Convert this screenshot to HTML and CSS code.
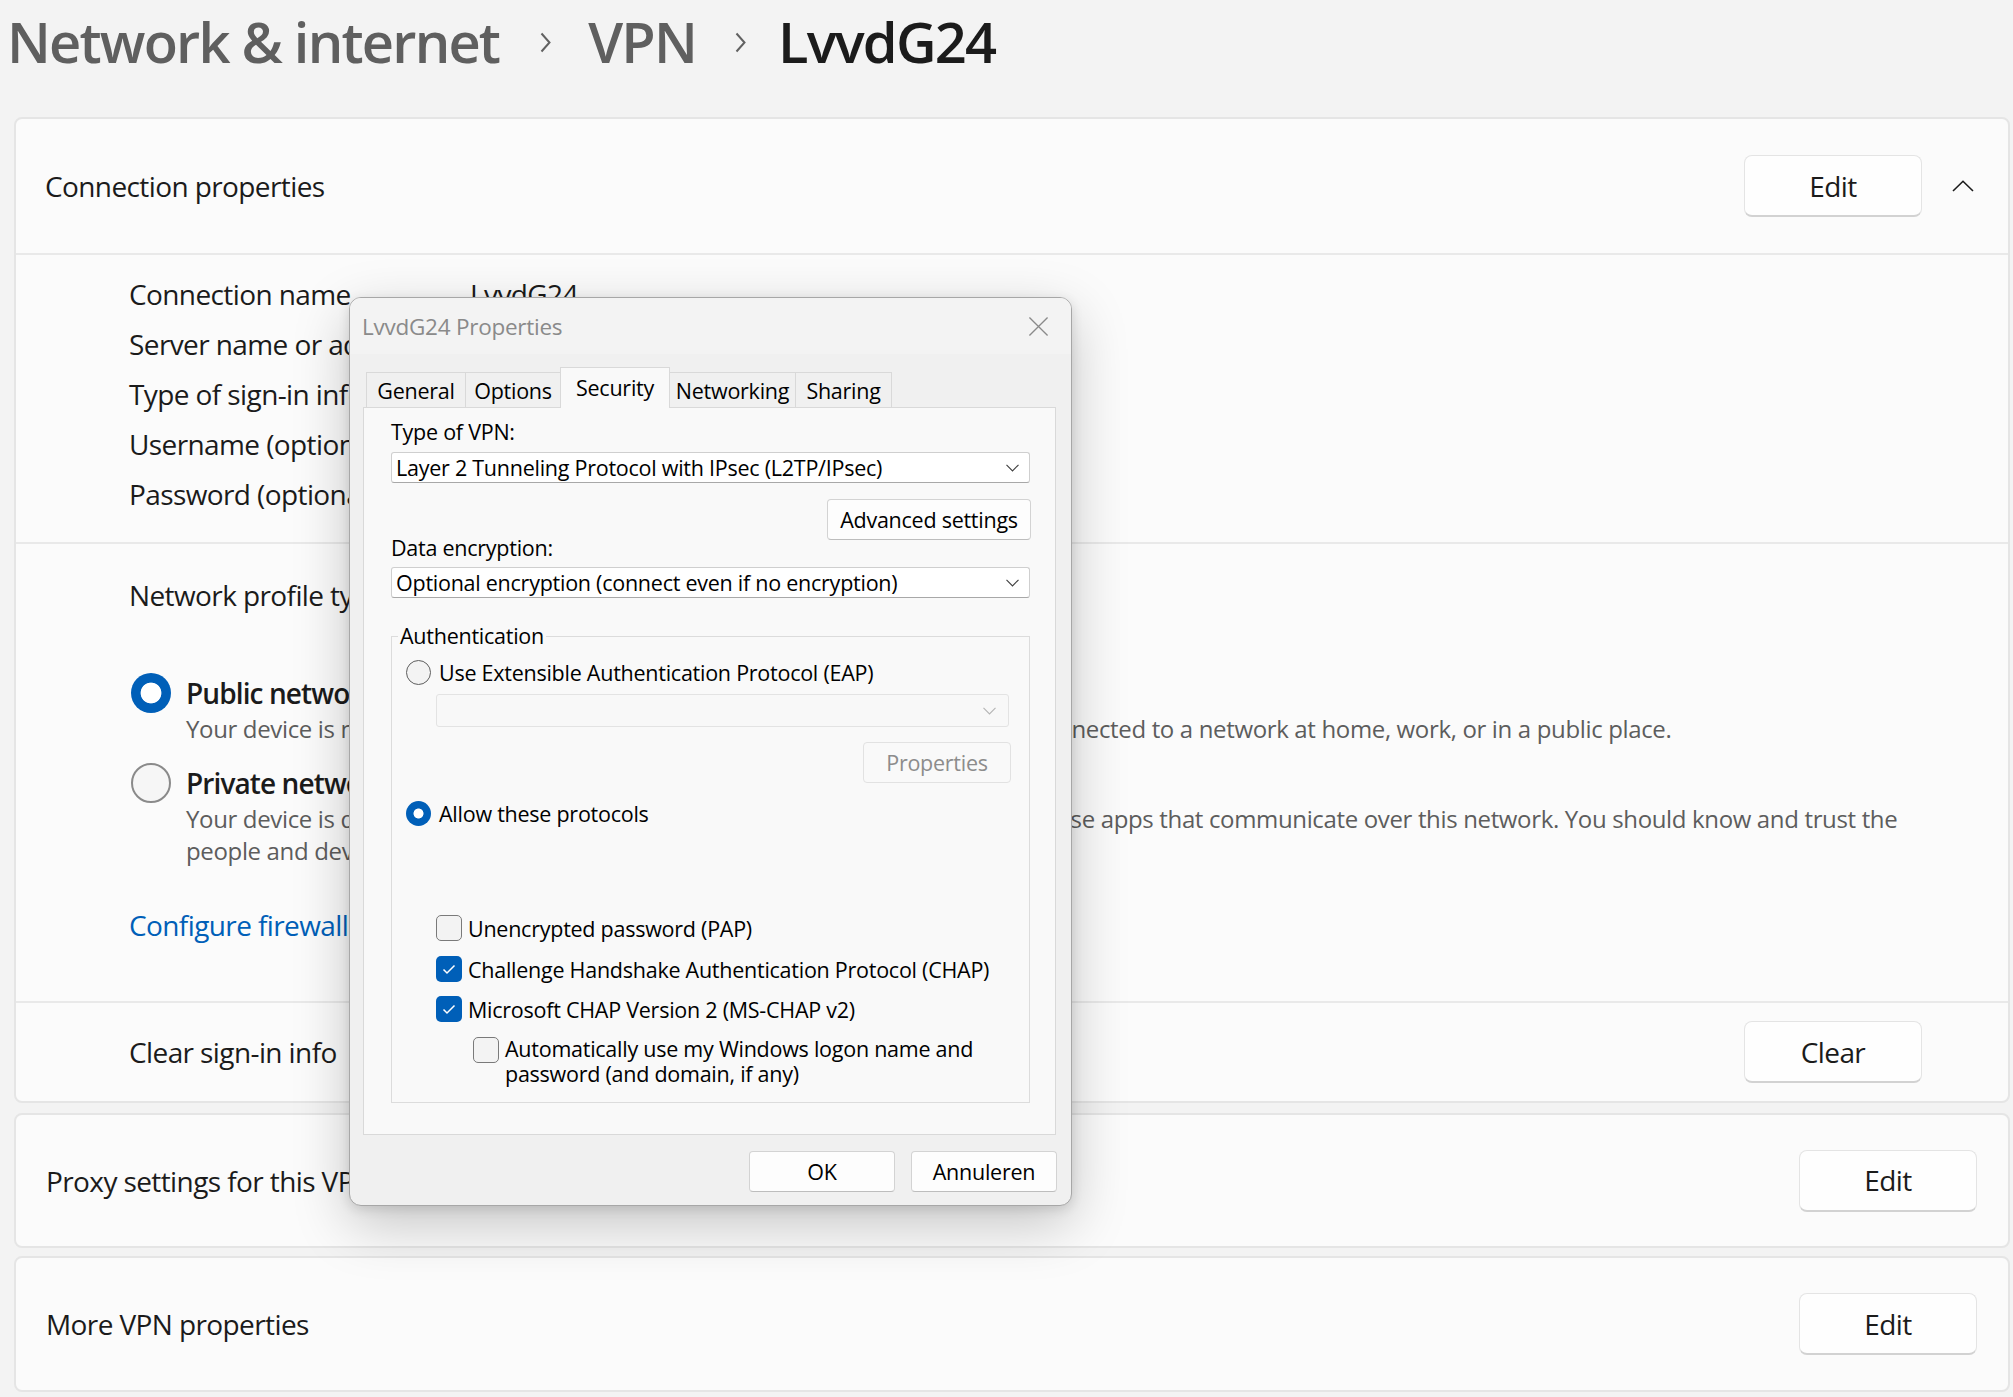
FILE: index.html
```html
<!DOCTYPE html>
<html lang="en">
<head>
<meta charset="utf-8">
<title>VPN - LvvdG24</title>
<link rel="stylesheet" href="styles.css">
</head>
<body>
<div class="page">
  <h1 class="crumbs">
    <span class="crumb">Network &amp; internet</span>
    <svg class="crumb-sep sep-first" viewBox="0 0 11 21"><path d="M1.5 1.5L9.5 10.5L1.5 19.5"/></svg>
    <span class="crumb">VPN</span>
    <svg class="crumb-sep sep-second" viewBox="0 0 11 21"><path d="M1.5 1.5L9.5 10.5L1.5 19.5"/></svg>
    <span class="crumb current">LvvdG24</span>
  </h1>

  <div class="cards">
    <section class="card card-conn">
      <div class="exp-head">
        <span class="row-title">Connection properties</span>
        <button class="btn">Edit</button>
        <span class="chev-box"><svg class="chev-up" viewBox="0 0 22 12"><path d="M1 11L11 1.3L21 11"/></svg></span>
      </div>
      <div class="details">
        <div class="detail"><span>Connection name</span><span>LvvdG24</span></div>
        <div class="detail"><span>Server name or address</span><span>vpn.lvvdg24.nl</span></div>
        <div class="detail"><span>Type of sign-in info</span><span>User name and password</span></div>
        <div class="detail"><span>Username (optional)</span><span></span></div>
        <div class="detail"><span>Password (optional)</span><span></span></div>
      </div>
      <div class="profile">
        <div class="profile-label">Network profile type</div>
        <div class="opt opt-public">
          <span class="radio on"></span>
          <div>
            <div class="opt-title">Public network</div>
            <div class="opt-desc">Your device is not discoverable on the network. Use this in most cases—when connected to a network at home, work, or in a public place.</div>
          </div>
        </div>
        <div class="opt opt-private">
          <span class="radio"></span>
          <div>
            <div class="opt-title">Private network</div>
            <div class="opt-desc">Your device is discoverable on the network. Select this if you need file sharing or use apps that communicate over this network. You should know and trust the<br>people and devices on the network.</div>
          </div>
        </div>
        <a class="link" href="#">Configure firewall and security settings</a>
      </div>
      <div class="clear-row">
        <span class="row-text">Clear sign-in info</span>
        <button class="btn">Clear</button>
      </div>
    </section>

    <section class="card card-simple card-proxy">
      <span class="row-title">Proxy settings for this VPN</span>
      <button class="btn">Edit</button>
    </section>

    <section class="card card-simple card-more">
      <span class="row-title">More VPN properties</span>
      <button class="btn">Edit</button>
    </section>
  </div>
</div>

<div class="dialog">
  <div class="dlg-title">
    <span>LvvdG24 Properties</span>
    <svg class="dlg-close" viewBox="0 0 22 22"><path d="M1.5 1.5L20.5 20.5M20.5 1.5L1.5 20.5"/></svg>
  </div>
  <div class="dlg-body">
    <div class="tabs">
      <div class="tab tab-general">General</div>
      <div class="tab tab-options">Options</div>
      <div class="tab tab-security sel">Security</div>
      <div class="tab tab-networking">Networking</div>
      <div class="tab tab-sharing">Sharing</div>
    </div>
    <div class="panel">
      <div class="lbl lbl-vpn">Type of VPN:</div>
      <div class="combo"><span>Layer 2 Tunneling Protocol with IPsec (L2TP/IPsec)</span><svg class="combo-chev" viewBox="0 0 13 8"><path d="M0.5 0.8L6.5 7L12.5 0.8"/></svg></div>
      <div class="btn-row btn-row-adv"><div class="dbtn adv">Advanced settings</div></div>
      <div class="lbl lbl-enc">Data encryption:</div>
      <div class="combo combo-enc"><span>Optional encryption (connect even if no encryption)</span><svg class="combo-chev" viewBox="0 0 13 8"><path d="M0.5 0.8L6.5 7L12.5 0.8"/></svg></div>
      <fieldset class="group">
        <legend>Authentication</legend>
        <div class="ropt ropt-eap"><span class="rad"></span><span>Use Extensible Authentication Protocol (EAP)</span></div>
        <div class="combo combo-off"><svg class="combo-chev" viewBox="0 0 13 8"><path d="M0.5 0.8L6.5 7L12.5 0.8"/></svg></div>
        <div class="btn-row btn-row-props"><div class="dbtn props off">Properties</div></div>
        <div class="ropt ropt-allow"><span class="rad on"></span><span>Allow these protocols</span></div>
        <div class="cbrow cb-pap"><span class="cb"></span><span>Unencrypted password (PAP)</span></div>
        <div class="cbrow cb-chap"><span class="cb on"><svg viewBox="0 0 26 26"><path d="M7.5 13.5L11 17L18.5 9.5"/></svg></span><span>Challenge Handshake Authentication Protocol (CHAP)</span></div>
        <div class="cbrow cb-ms"><span class="cb on"><svg viewBox="0 0 26 26"><path d="M7.5 13.5L11 17L18.5 9.5"/></svg></span><span>Microsoft CHAP Version 2 (MS-CHAP v2)</span></div>
        <div class="cbrow cb-auto"><span class="cb"></span><span>Automatically use my Windows logon name and<br>password (and domain, if any)</span></div>
      </fieldset>
    </div>
    <div class="dlg-foot">
      <div class="dbtn foot">OK</div>
      <div class="dbtn foot">Annuleren</div>
    </div>
  </div>
</div>
</body>
</html>
```

FILE: styles.css
```css
* { box-sizing: border-box; }

html, body { margin: 0; padding: 0; }

body {
  width: 2013px;
  height: 1397px;
  overflow: hidden;
  position: relative;
  background: #f3f3f3;
  color: #1b1b1b;
  font-family: "Open Sans", "Noto Sans", sans-serif;
}

/* ---------- breadcrumb title ---------- */
.crumbs {
  display: flex;
  align-items: center;
  height: 56px;
  margin: 13px 0 48px;
  padding-left: 7px;
  font-size: 56px;
  line-height: 56px;
  font-weight: 600;
  letter-spacing: -1.8px;
  color: #5f5f5f;
}
.crumb { white-space: nowrap; }
.crumb.current { color: #1b1b1b; }
.crumb-sep {
  width: 11px;
  height: 21px;
  fill: none;
  stroke: #616161;
  stroke-width: 2;
}
.sep-first { margin: 3px 37px 0 41px; }
.sep-second { margin: 3px 32px 0 39px; }

/* ---------- cards ---------- */
.cards { margin: 0 3px 0 14px; }

.card {
  background: #fbfbfb;
  border: 2px solid #e5e5e5;
  border-radius: 8px;
}

.row-title, .row-text, .detail, .profile-label, .link {
  font-size: 28px;
  letter-spacing: -0.6px;
}

.btn {
  width: 178px;
  height: 62px;
  flex: none;
  padding: 0;
  background: #fefefe;
  border: 1px solid #e4e4e4;
  border-bottom: 2px solid #d2d2d2;
  border-radius: 8px;
  font-family: inherit;
  font-size: 28px;
  letter-spacing: -0.6px;
  color: #1b1b1b;
}

.exp-head {
  height: 136px;
  display: flex;
  align-items: center;
  padding: 0 4px 0 29px;
  border-bottom: 2px solid #e9e9e9;
}
.exp-head .row-title { flex: 1; }
.chev-box {
  width: 82px;
  display: flex;
  justify-content: center;
}
.chev-up {
  width: 22px;
  height: 12px;
  fill: none;
  stroke: #1b1b1b;
  stroke-width: 1.6;
}

.details {
  padding: 14px 0 23px 113px;
  border-bottom: 2px solid #e9e9e9;
}
.detail {
  display: grid;
  grid-template-columns: 341px 1fr;
  align-items: center;
  height: 50px;
  white-space: nowrap;
}

.profile {
  padding: 31px 0 56px 113px;
  border-bottom: 2px solid #e9e9e9;
}
.profile-label { line-height: 40px; }

.opt {
  display: grid;
  grid-template-columns: 40px 1fr;
  column-gap: 15px;
  padding-left: 2px;
}
.opt-public { margin-top: 58px; }
.opt-private { margin-top: 18px; }

.radio {
  width: 40px;
  height: 40px;
  border-radius: 50%;
  border: 2px solid #8a8a8a;
  background: #f6f6f6;
}
.radio.on {
  border: none;
  background: radial-gradient(circle, #ffffff 0 10px, #005fb8 10.8px);
}

.opt-title {
  font-size: 28px;
  line-height: 40px;
  font-weight: 600;
  letter-spacing: -0.9px;
}
.opt-desc {
  font-size: 24px;
  line-height: 32px;
  letter-spacing: -0.35px;
  color: #5d5d5d;
  white-space: nowrap;
}

.link {
  display: block;
  width: max-content;
  margin-top: 38px;
  line-height: 40px;
  color: #005fb8;
  text-decoration: none;
}

.clear-row {
  height: 98px;
  display: flex;
  align-items: center;
  justify-content: space-between;
  padding: 0 86px 0 113px;
}

.card-simple {
  display: flex;
  align-items: center;
  justify-content: space-between;
  padding: 0 31px 0 30px;
}
.card-proxy { height: 135px; margin-top: 10px; }
.card-more { height: 136px; margin-top: 8px; }

/* ---------- dialog ---------- */
.dialog {
  position: absolute;
  left: 349px;
  top: 297px;
  width: 723px;
  border: 1px solid #a7a7a7;
  border-radius: 12px;
  background: #f0f0f0;
  overflow: hidden;
  box-shadow: 0 18px 56px rgba(0, 0, 0, 0.22), 0 3px 12px rgba(0, 0, 0, 0.12);
  font-family: "Open Sans", "Noto Sans", sans-serif;
  font-size: 21.5px;
  letter-spacing: -0.25px;
  color: #000;
}

.dlg-title {
  height: 56px;
  display: flex;
  align-items: center;
  justify-content: space-between;
  padding: 0 22px 0 12px;
  background: #f3f3f3;
  font-size: 22.5px;
  color: #8a8a8a;
}
.dlg-close {
  width: 21px;
  height: 21px;
  fill: none;
  stroke: #8a8a8a;
  stroke-width: 1.4;
}

.dlg-body { padding: 13px 15px 0 13px; }

.tabs {
  display: flex;
  align-items: flex-end;
  height: 40px;
  padding-left: 3px;
}
.tab {
  height: 35px;
  display: flex;
  align-items: center;
  justify-content: center;
  margin-right: -1px;
  border: 1px solid #d9d9d9;
  border-bottom: none;
  background: #f0f0f0;
  white-space: nowrap;
}
.tab-general { width: 100px; }
.tab-options { width: 96px; }
.tab-security { width: 110px; }
.tab-networking { width: 127px; }
.tab-sharing { width: 97px; }
.tab.sel {
  position: relative;
  z-index: 1;
  height: 41px;
  margin-bottom: -1px;
  padding-bottom: 2px;
  background: #f9f9f9;
}

.panel {
  height: 728px;
  padding: 0 25px 0 27px;
  background: #f9f9f9;
  border: 1px solid #d9d9d9;
}

.lbl { white-space: nowrap; }
.lbl-vpn { margin-top: 10px; line-height: 28px; }
.lbl-enc { margin-top: -4px; line-height: 24px; }

.combo {
  height: 31px;
  display: flex;
  align-items: center;
  justify-content: space-between;
  padding: 0 10px 0 4px;
  margin-top: 6px;
  background: #ffffff;
  border: 1px solid #cfcfcf;
  border-bottom-color: #a8a8a8;
  border-radius: 3px;
  white-space: nowrap;
}
.combo-enc { margin-top: 7px; }
.combo-chev {
  width: 13px;
  height: 8px;
  flex: none;
  fill: none;
  stroke: #404040;
  stroke-width: 1.1;
}

.btn-row { display: flex; justify-content: flex-end; }
.btn-row-adv { margin-top: 16px; margin-right: -1px; }

.dbtn {
  height: 41px;
  display: flex;
  align-items: center;
  justify-content: center;
  background: #fdfdfd;
  border: 1px solid #d3d3d3;
  border-bottom-color: #bdbdbd;
  border-radius: 4px;
  white-space: nowrap;
}
.dbtn.adv { width: 204px; }
.dbtn.props { width: 148px; }
.dbtn.off {
  background: #f9f9f9;
  border-color: #e2e2e2;
  color: #8c8c8c;
}
.dbtn.foot { width: 146px; }

.group {
  margin: 26px 0 0;
  padding: 0 20px 16px 14px;
  min-width: 0;
  border: 1px solid #dcdcdc;
}
.group legend {
  padding: 0 2px;
  margin-left: -8px;
  line-height: 24px;
}

.ropt {
  height: 26px;
  display: flex;
  align-items: center;
  gap: 8px;
  white-space: nowrap;
}
.ropt-eap { margin-top: 11px; }
.ropt-allow { margin-top: 17px; }

.rad {
  width: 25px;
  height: 25px;
  flex: none;
  border-radius: 50%;
  border: 1.5px solid #5e5e5e;
  background: #f3f3f3;
}
.rad.on {
  border: none;
  background: radial-gradient(circle, #ffffff 0 4.6px, #005fb8 5.4px);
}

.combo-off {
  height: 33px;
  margin: 9px 0 0 30px;
  background: #f8f8f8;
  border: 1px solid #e3e3e3;
  justify-content: flex-end;
  padding-right: 12px;
}
.combo-off .combo-chev { stroke: #b5b5b5; }

.btn-row-props { margin-top: 15px; margin-right: -2px; }

.cbrow {
  display: flex;
  align-items: center;
  gap: 6px;
  height: 26px;
  margin-left: 30px;
  white-space: nowrap;
}
.cb-pap { margin-top: 89px; }
.cb-chap { margin-top: 15px; }
.cb-ms { margin-top: 14px; }
.cb-auto {
  margin: 14px 0 0 67px;
  height: 50px;
  align-items: flex-start;
  line-height: 25px;
}
.cb-auto .cb { margin-top: 1px; }

.cb {
  width: 26px;
  height: 26px;
  flex: none;
  border: 1.5px solid #7a7a7a;
  border-radius: 5px;
  background: #f3f3f3;
}
.cb.on {
  border: none;
  background: #005fb8;
}
.cb svg {
  display: block;
  width: 26px;
  height: 26px;
  fill: none;
  stroke: #ffffff;
  stroke-width: 1.5;
}

.dlg-foot {
  display: flex;
  justify-content: flex-end;
  gap: 16px;
  padding: 16px 0 13px 0;
  margin-right: -1px;
}
```
